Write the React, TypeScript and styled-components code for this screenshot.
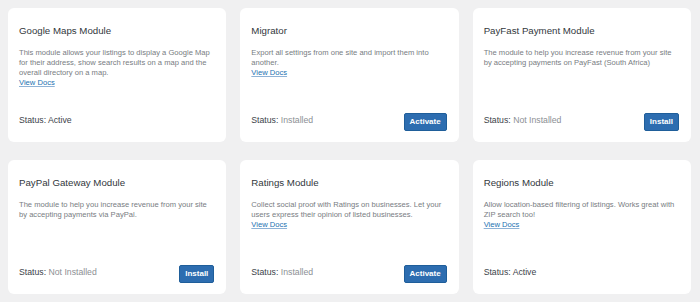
import React from 'react';
import styled, { createGlobalStyle } from 'styled-components';

const GlobalStyle = createGlobalStyle`
  html, body {
    margin: 0;
    padding: 0;
    background: #f0f0f1;
  }
  body {
    font-family: 'Liberation Sans', Arial, sans-serif;
  }
`;

const Grid = styled.div`
  display: grid;
  grid-template-columns: repeat(3, 1fr);
  grid-auto-rows: 134px;
  gap: 18px 14px;
  padding: 8px 9px 8px 8px;
`;

const Card = styled.div`
  display: flex;
  flex-direction: column;
  background: #fff;
  border-radius: 6px;
  padding: 17px 12px 11px 11px;
  box-sizing: border-box;
`;

const Title = styled.h3`
  margin: 0 0 11px;
  font-size: 9.7px;
  line-height: 12px;
  font-weight: 400;
  color: #32373c;
`;

const Desc = styled.p`
  margin: 0;
  font-size: 7.6px;
  line-height: 10px;
  color: #787c82;
`;

const DocsLink = styled.a`
  display: block;
  font-size: 7.6px;
  line-height: 10px;
  color: #2271b1;
  text-decoration: underline;
  text-decoration-color: #8fb3d6;
`;

const Footer = styled.div`
  margin-top: auto;
  display: flex;
  align-items: center;
  justify-content: space-between;
  height: 18px;
`;

const Status = styled.span`
  font-size: 8.7px;
  color: #3c434a;
  margin-top: -4px;
`;

const StatusValue = styled.span<{ $active: boolean }>`
  color: ${(p) => (p.$active ? '#3c434a' : '#8c8f94')};
`;

const Button = styled.button`
  height: 18px;
  padding: 0 5px;
  border: 1px solid #1f5e9a;
  border-radius: 2px;
  background: #2d6db0;
  color: #fff;
  font-family: 'Liberation Sans', Arial, sans-serif;
  font-size: 8px;
  font-weight: 700;
  line-height: 16px;
  cursor: pointer;
`;

type Module = {
  title: string;
  desc: string;
  docs: boolean;
  status: 'Active' | 'Installed' | 'Not Installed';
};

const modules: Module[] = [
  {
    title: 'Google Maps Module',
    desc: 'This module allows your listings to display a Google Map for their address, show search results on a map and the overall directory on a map.',
    docs: true,
    status: 'Active',
  },
  {
    title: 'Migrator',
    desc: 'Export all settings from one site and import them into another.',
    docs: true,
    status: 'Installed',
  },
  {
    title: 'PayFast Payment Module',
    desc: 'The module to help you increase revenue from your site by accepting payments on PayFast (South Africa)',
    docs: false,
    status: 'Not Installed',
  },
  {
    title: 'PayPal Gateway Module',
    desc: 'The module to help you increase revenue from your site by accepting payments via PayPal.',
    docs: false,
    status: 'Not Installed',
  },
  {
    title: 'Ratings Module',
    desc: 'Collect social proof with Ratings on businesses. Let your users express their opinion of listed businesses.',
    docs: true,
    status: 'Installed',
  },
  {
    title: 'Regions Module',
    desc: 'Allow location-based filtering of listings. Works great with ZIP search too!',
    docs: true,
    status: 'Active',
  },
];

const actionFor = (status: Module['status']) => {
  if (status === 'Installed') return 'Activate';
  if (status === 'Not Installed') return 'Install';
  return null;
};

const ModuleCard: React.FC<{ module: Module }> = ({ module }) => {
  const action = actionFor(module.status);
  return (
    <Card>
      <Title>{module.title}</Title>
      <Desc>{module.desc}</Desc>
      {module.docs && <DocsLink href="#">View Docs</DocsLink>}
      <Footer>
        <Status>
          Status: <StatusValue $active={module.status === 'Active'}>{module.status}</StatusValue>
        </Status>
        {action && <Button>{action}</Button>}
      </Footer>
    </Card>
  );
};

export default function App() {
  return (
    <>
      <GlobalStyle />
      <Grid>
        {modules.map((m) => (
          <ModuleCard key={m.title} module={m} />
        ))}
      </Grid>
    </>
  );
}
